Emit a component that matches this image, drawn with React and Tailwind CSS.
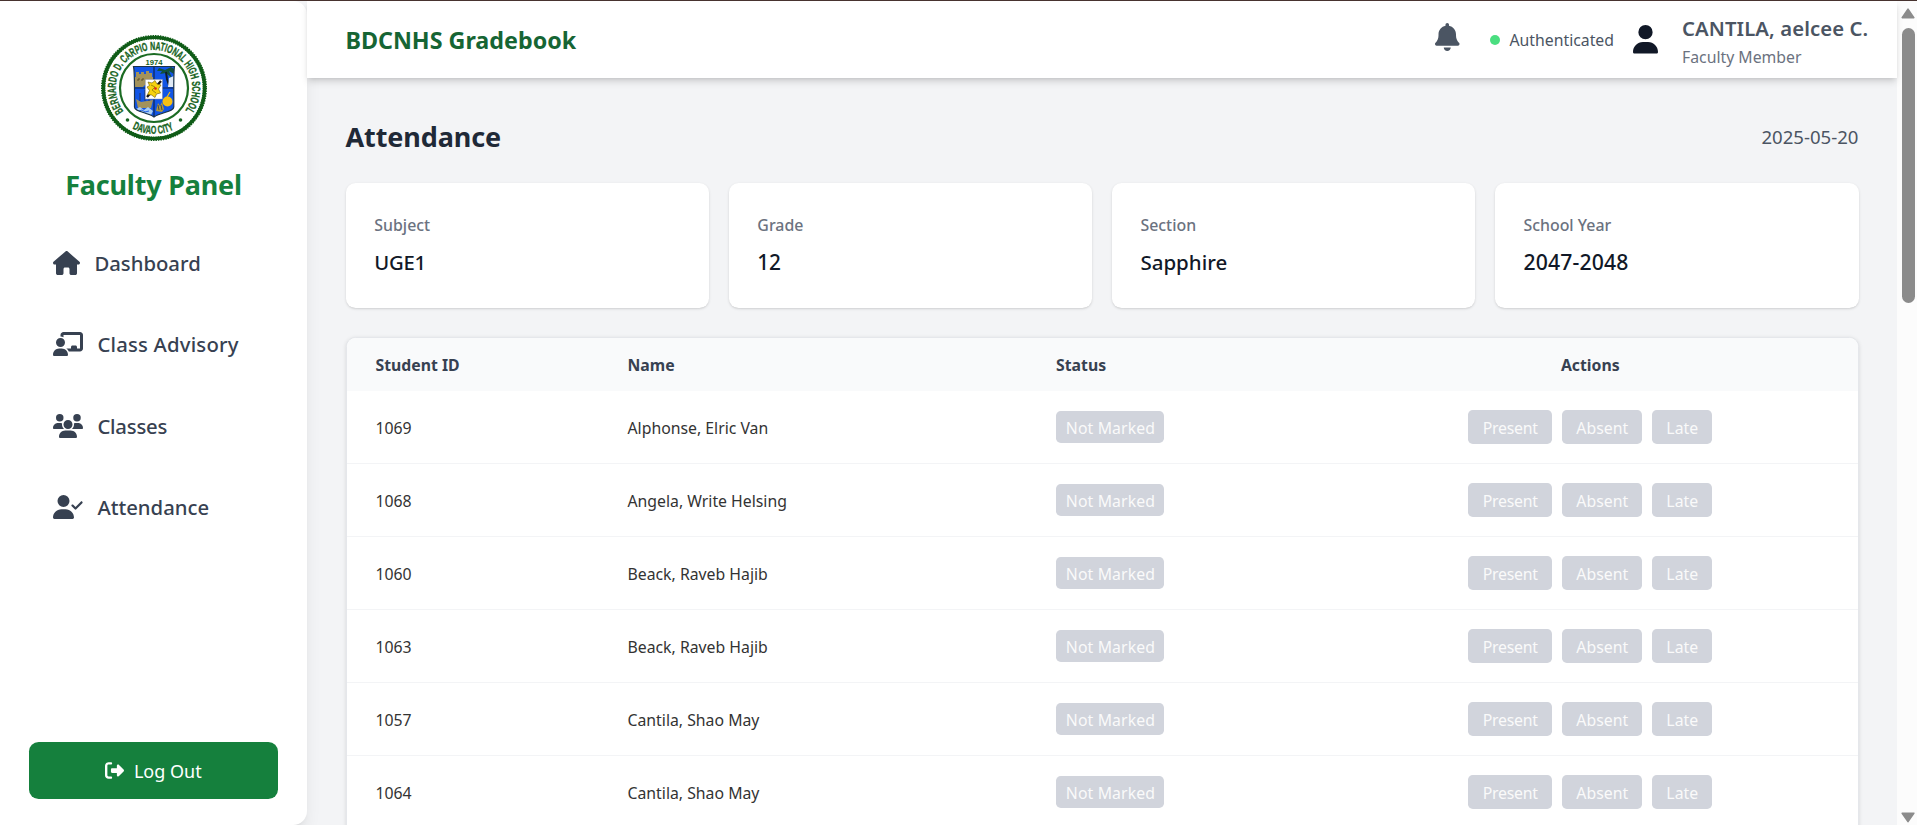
import React from "react";
import {
  FaHouse,
  FaChalkboardUser,
  FaUsers,
  FaUserCheck,
  FaRightFromBracket,
  FaBell,
  FaUser,
} from "react-icons/fa6";

const navItems = [
  { label: "Dashboard", Icon: FaHouse, iconClass: "h-6 w-[27px]", textClass: "" },
  { label: "Class Advisory", Icon: FaChalkboardUser, iconClass: "h-6 w-[30px]", textClass: "tracking-[0.2px]" },
  { label: "Classes", Icon: FaUsers, iconClass: "h-6 w-[30px]", textClass: "tracking-[-0.2px]" },
  { label: "Attendance", Icon: FaUserCheck, iconClass: "h-6 w-[30px]", textClass: "" },
];

const cards = [
  { label: "Subject", value: "UGE1", valueClass: "text-[20.3px] tracking-[-0.3px]" },
  { label: "Grade", value: "12", valueClass: "text-[20.8px] tracking-[-0.3px]" },
  { label: "Section", value: "Sapphire", valueClass: "text-[20.5px]" },
  { label: "School Year", value: "2047-2048", valueClass: "text-[21.2px] tracking-[0.15px]" },
];

const students = [
  { id: "1069", name: "Alphonse, Elric Van" },
  { id: "1068", name: "Angela, Write Helsing" },
  { id: "1060", name: "Beack, Raveb Hajib" },
  { id: "1063", name: "Beack, Raveb Hajib" },
  { id: "1057", name: "Cantila, Shao May" },
  { id: "1064", name: "Cantila, Shao May" },
];

function SchoolSeal() {
  return (
    <svg viewBox="0 0 106 106" className="h-[106px] w-[106px]">
      <defs>
        <path id="seal-top" d="M 22.6 76.3 A 38.2 38.2 0 1 1 83.4 76.3" />
        <path id="seal-bottom" d="M 31.4 93.5 A 46 46 0 0 0 74.6 93.5" />
        <clipPath id="shield">
          <path d="M32.5 31.5H73.5C72.5 37 72.8 50 72.8 72C72.8 77 60 77 53 82C46 77 33.5 77 33.5 72C33.5 50 33.8 37 32.5 31.5Z" />
        </clipPath>
      </defs>
      <circle cx="53" cy="53" r="50.6" fill="#fff" stroke="#0f5c17" strokeWidth="3.4" />
      <circle cx="53" cy="53" r="50.8" fill="none" stroke="#0f5c17" strokeWidth="4.4" strokeDasharray="1.4 1" />
      <circle cx="53" cy="53" r="34" fill="none" stroke="#1b6b23" strokeWidth="2.2" />
      <g
        fill="#176322"
        stroke="#176322"
        strokeWidth="0.35"
        fontFamily="'Liberation Sans Narrow', 'Liberation Sans', sans-serif"
        fontWeight="700"
      >
        <text fontSize="11.6" textLength="168" lengthAdjust="spacingAndGlyphs">
          <textPath href="#seal-top" textLength="168" lengthAdjust="spacingAndGlyphs">
            BERNARDO D. CARPIO NATIONAL HIGH SCHOOL
          </textPath>
        </text>
        <text fontSize="11.4" textLength="43" lengthAdjust="spacingAndGlyphs">
          <textPath href="#seal-bottom" textLength="43" lengthAdjust="spacingAndGlyphs">
            DAVAO CITY
          </textPath>
        </text>
        <text x="44.5" y="30" fontSize="7.8" strokeWidth="0" textLength="17" lengthAdjust="spacingAndGlyphs">
          1974
        </text>
      </g>
      <circle cx="26.5" cy="85" r="1.8" fill="#176322" />
      <circle cx="79.5" cy="85" r="1.8" fill="#176322" />
      <g clipPath="url(#shield)">
        <rect x="32" y="31" width="42" height="52" fill="#1155e6" />
        <path d="M34 52V42H35V37H38V39H40V37H43V39H45V36H48V38H51V42H52V50H44L42 52Z" fill="#a3925a" />
        <path d="M36 45h2v-2M40 45h2v-2" stroke="#5b4d2a" strokeWidth="1" fill="none" />
        <path d="M58 33L64 35L70 32L73 34V39L68 36L71 43L65 38L59 39L61 36L56 36Z" fill="#12513b" />
        <path d="M65 37L66 44L68 50" stroke="#101c26" strokeWidth="2" fill="none" />
        <path d="M68 43L73 41V52H67Z" fill="#dfe9f5" />
        <path d="M35 64L40 67L52 65L50 73H37Z" fill="#a3925a" />
        <path d="M39 66V58M44 66V55M48 66V60" stroke="#26375a" strokeWidth="1" />
        <path d="M35 74L39 72L43 75L47 72L52 76L50 80L40 78Z" fill="#a9cdf5" />
        <path d="M38 76l3-1 3 2 4-1" stroke="#1155e6" strokeWidth="0.9" fill="none" />
        <circle cx="66.5" cy="66.5" r="5" fill="#f7bf12" />
        <path d="M66 62L69 57" stroke="#f7bf12" strokeWidth="1.2" />
        <path d="M55 76L57 68L59 71L61 67L63 74L61 77Z" fill="#b29637" />
        <path d="M57 70l1 5M60 70l1 5" stroke="#20355c" strokeWidth="0.8" />
        <path d="M53 31V82M33 53H73" stroke="#10264f" strokeWidth="1.2" />
      </g>
      <path
        d="M32.5 31.5H73.5C72.5 37 72.8 50 72.8 72C72.8 77 60 77 53 82C46 77 33.5 77 33.5 72C33.5 50 33.8 37 32.5 31.5Z"
        fill="none"
        stroke="#1d3347"
        strokeWidth="1.2"
      />
      <rect x="44.3" y="44.5" width="17" height="19.5" fill="#fff" stroke="#99a" strokeWidth="0.5" />
      <path d="M46 62L60 46" stroke="#151515" strokeWidth="2.4" />
      <path
        d="M47 47L51 48L54 45.5L56 49L60 50L57.5 54L59.5 58L55.5 59L54 62.5L50.5 60L46.5 59.5L48.5 55.5L46 52L48.5 50.5Z"
        fill="#f6d210"
        stroke="#6e5a08"
        strokeWidth="0.6"
      />
      <path d="M50 50l4 2-3 3 4 3" stroke="#6e5a08" strokeWidth="0.6" fill="none" />
      <circle cx="54.5" cy="53.5" r="1.3" fill="#e02418" />
    </svg>
  );
}

function Sidebar() {
  return (
    <aside className="relative z-10 flex w-[307px] shrink-0 flex-col rounded-r-[14px] bg-white px-[29px] pt-[33.5px] pb-[26px] shadow-[0_12px_18px_-4px_rgba(0,0,0,0.1),0_5px_7px_-5px_rgba(0,0,0,0.1)]">
      <div className="flex justify-center">
        <SchoolSeal />
      </div>
      <h2 className="mt-[26.5px] text-center text-[27px] leading-9 font-bold tracking-[-0.2px] text-[#15803d]">
        Faculty Panel
      </h2>
      <nav className="mt-[19.3px] flex flex-col">
        {navItems.map(({ label, Icon, iconClass, textClass }) => (
          <a key={label} className="flex h-[81.4px] items-center gap-[14.4px] pl-6 text-[#374151]">
            <Icon className={iconClass} preserveAspectRatio="none" />
            <span className={`text-[20.3px] leading-7 font-medium ${textClass}`}>{label}</span>
          </a>
        ))}
      </nav>
      <button className="mt-auto flex h-[57px] w-full items-center justify-center gap-[9.6px] rounded-[9.6px] bg-[#15803d] text-white">
        <FaRightFromBracket className="h-[19px] w-[19px]" />
        <span className="text-[18px] leading-7">Log Out</span>
      </button>
    </aside>
  );
}

function Header() {
  return (
    <header className="relative z-20 flex h-[77px] shrink-0 items-center justify-between bg-white pr-[28px] pl-[38.4px] shadow-[0_5px_7px_-1px_rgba(0,0,0,0.13),0_2px_5px_-2px_rgba(0,0,0,0.13)]">
      <h1 className="text-[23.3px] leading-8 font-bold text-[#166534]">BDCNHS Gradebook</h1>
      <div className="flex items-center">
        <FaBell className="mb-[5px] h-7 w-[24.5px] text-[#4b5563]" />
        <div className="ml-[30.5px] flex w-[124px] items-center gap-[9.5px]">
          <span className="h-2.5 w-2.5 rounded-full bg-[#4ade80]" />
          <span className="text-[15.8px] leading-6 text-[#4b5563]">Authenticated</span>
        </div>
        <FaUser className="ml-[19px] h-[28.6px] w-[25px] text-[#111827]" />
        <div className="ml-[24px] w-[187px] pt-[2px]">
          <p className="text-[20.3px] leading-7 font-semibold tracking-[0.1px] whitespace-nowrap text-[#4b5563]">
            CANTILA, aelcee C.
          </p>
          <p className="mt-[4px] text-[15.8px] leading-[22px] text-[#6b7280]">Faculty Member</p>
        </div>
      </div>
    </header>
  );
}

function InfoCard({ label, value, valueClass }) {
  return (
    <div className="h-[125px] rounded-[9.6px] bg-white px-[28.8px] pt-[30px] shadow-[0_1px_3px_rgba(0,0,0,0.12),0_1px_2px_-1px_rgba(0,0,0,0.12)]">
      <p className="text-[15.9px] leading-6 font-medium text-[#6b7280]">{label}</p>
      <p className={`mt-[10px] leading-[30px] font-medium text-[#111827] ${valueClass}`}>{value}</p>
    </div>
  );
}

function ActionButton({ children, className }) {
  return (
    <button
      className={`flex h-[34px] items-center justify-center rounded-[4.8px] bg-[#d1d4dc] pt-[3px] text-[15.8px] text-[#fafafa] ${className}`}
    >
      {children}
    </button>
  );
}

const columns = "grid grid-cols-[252px_428.5px_296px_1fr] items-center";

function AttendanceTable() {
  return (
    <div className="mt-[29px] overflow-hidden rounded-t-[9.6px] border border-[#e5e7eb] bg-white shadow-[0_1px_4px_rgba(0,0,0,0.12)]">
      <div className={`${columns} h-[53px] bg-[#f9fafb] pt-[2px] text-[15.8px] font-bold text-[#374151]`}>
        <div className="pl-[29px]">Student ID</div>
        <div className="pl-[29px]">Name</div>
        <div className="pl-[29px]">Status</div>
        <div className="text-center">Actions</div>
      </div>
      {students.map(({ id, name }) => (
        <div key={id} className={`${columns} h-[73px] border-b border-[#f3f4f6] text-[15.8px] text-[#333]`}>
          <div className="pt-[4px] pl-[29px]">{id}</div>
          <div className="pt-[4px] pl-[29px]">{name}</div>
          <div className="pl-[29px]">
            <span className="flex h-8 w-[108px] items-center justify-center rounded-[4.8px] bg-[#d1d4dc] pt-[3px] pl-[1px] tracking-[0.12px] text-[#fafafa]">
              Not Marked
            </span>
          </div>
          <div className="flex justify-center gap-2.5">
            <ActionButton className="w-[84px] tracking-[-0.25px]">Present</ActionButton>
            <ActionButton className="w-[80px]">Absent</ActionButton>
            <ActionButton className="w-[60px]">Late</ActionButton>
          </div>
        </div>
      ))}
    </div>
  );
}

function Scrollbar() {
  return (
    <div className="flex w-5 shrink-0 flex-col items-center bg-[#fcfcfc] pt-[7px] pb-[2px] pl-[2px]">
      <svg viewBox="0 0 14 11" className="h-[11px] w-[14px] shrink-0">
        <path d="M7 1.2L12.8 9.6H1.2Z" fill="#8b8b8b" stroke="#8b8b8b" strokeWidth="1.6" strokeLinejoin="round" />
      </svg>
      <div className="mt-[9px] h-[275px] w-[13px] shrink-0 rounded-full bg-[#8b8b8b]" />
      <svg viewBox="0 0 14 11" className="mt-auto h-[11px] w-[14px] shrink-0">
        <path d="M7 9.6L12.8 1.2H1.2Z" fill="#8b8b8b" stroke="#8b8b8b" strokeWidth="1.6" strokeLinejoin="round" />
      </svg>
    </div>
  );
}

export default function App() {
  return (
    <div className="flex h-[825px] w-[1917px] overflow-hidden border-t border-[#47332f] bg-[#f3f4f6] font-['Noto_Sans',sans-serif]">
      <Sidebar />
      <div className="flex min-w-0 flex-1 flex-col">
        <Header />
        <main className="min-h-0 flex-1 overflow-hidden px-[38.5px] pt-[39px]">
          <div className="mb-[26px] flex items-center justify-between">
            <h2 className="text-[27px] leading-10 font-bold tracking-[-0.1px] text-[#1f2937]">Attendance</h2>
            <span className="text-[18.6px] leading-7 text-[#4b5563]">2025-05-20</span>
          </div>
          <div className="grid grid-cols-4 gap-[19.2px]">
            {cards.map((card) => (
              <InfoCard key={card.label} {...card} />
            ))}
          </div>
          <AttendanceTable />
        </main>
      </div>
      <Scrollbar />
    </div>
  );
}
